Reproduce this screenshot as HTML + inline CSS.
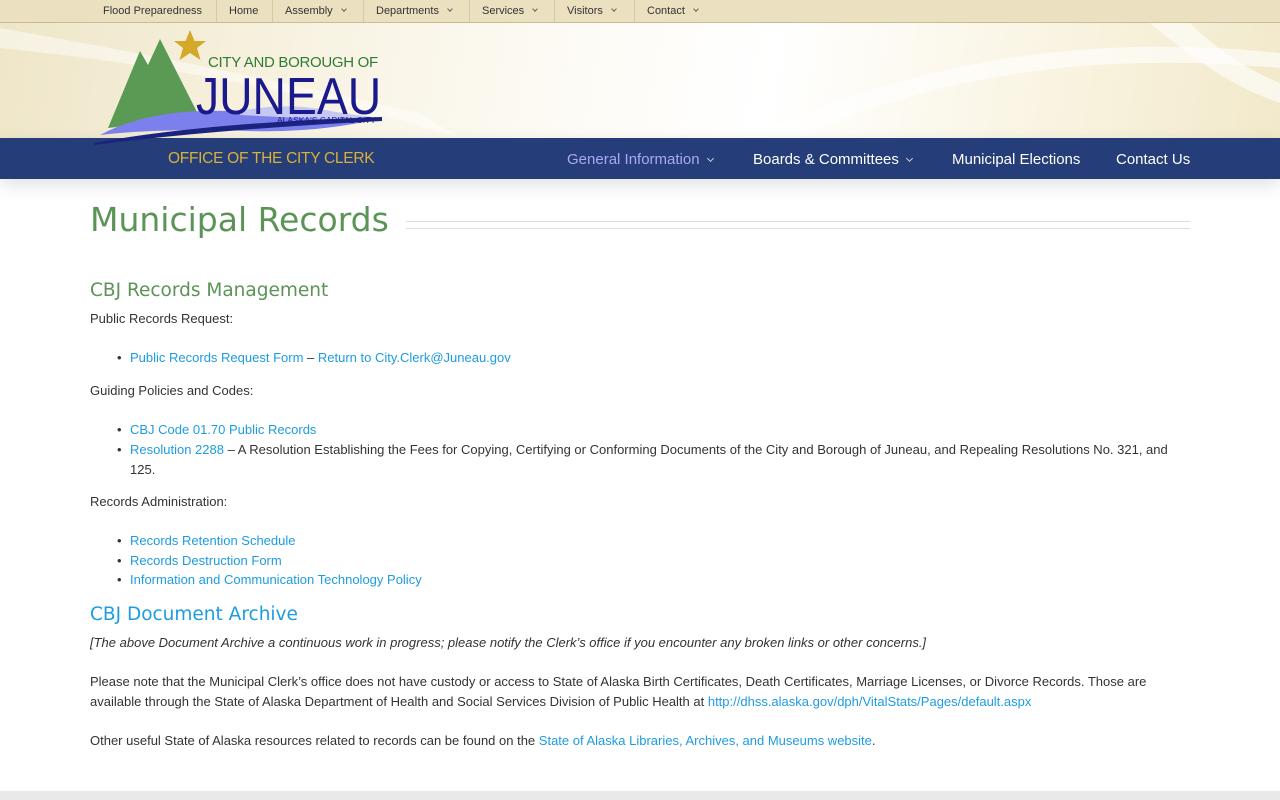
<!DOCTYPE html>
<html><head><meta charset="utf-8"><style>
*{margin:0;padding:0;box-sizing:border-box}
body{width:1280px;height:800px;overflow:hidden;background:#fff;font-family:"Liberation Sans",Arial,sans-serif;color:#333;position:relative}
.top{position:absolute;left:0;top:0;width:1280px;height:23px;background:#ebe0c0;border-bottom:1px solid #c9bb93}
.top a{position:absolute;top:0;height:22px;line-height:23px;font-size:11px;color:#333;text-decoration:none;border-left:1px solid #d6c9a4;padding:0 12px}
.car{display:inline-block;width:4px;height:4px;border-right:1px solid #666;border-bottom:1px solid #666;transform:rotate(45deg);margin-left:9px;position:relative;top:-3px}
.hdr{position:absolute;left:0;top:23px;width:1280px;height:115px;background:linear-gradient(100deg,#efe6c8 0%,#f8f3e3 25%,#fdfbf5 45%,#fff 60%,#f8f2dd 85%,#f2e9cb 100%);overflow:hidden}
.nav{position:absolute;left:0;top:138px;width:1280px;height:41px;background:#253d78;box-shadow:0 6px 18px rgba(0,0,0,.12)}
.nav a{position:absolute;top:0;line-height:44px;font-size:15px;color:#fff;text-decoration:none}
.nav .car{border-color:#ccc;width:5px;height:5px;margin-left:8px}
.content{position:absolute;left:90px;top:0;width:1100px}
h1{position:absolute;top:200px;left:0;font-family:"DejaVu Sans",sans-serif;font-weight:normal;font-size:33px;color:#5b9456;white-space:nowrap}
.rule{position:absolute;top:221px;left:316px;width:784px;height:8px;border-top:1px solid #ddd;border-bottom:1px solid #ddd}
h2{position:absolute;left:0;font-family:"DejaVu Sans",sans-serif;font-weight:normal;font-size:18.5px;white-space:nowrap}
p,li{font-size:13px;line-height:19.5px;color:#333;position:absolute;left:0;width:1100px}
ul{list-style:none}
ul li{left:40px;width:1060px}
ul li:before{content:"•";position:absolute;left:-13px}
a.l{color:#1d9ce0;text-decoration:none}
.foot{position:absolute;left:0;top:791px;width:1280px;height:9px;background:#e9e9e9}
.logo{position:absolute;left:0;top:23px;width:400px;height:125px;z-index:5}
</style></head><body>
<div class="top">
<a style="left:91px;border-left:none">Flood Preparedness</a>
<a style="left:216px">Home</a>
<a style="left:272px">Assembly<span class="car"></span></a>
<a style="left:363px">Departments<span class="car"></span></a>
<a style="left:469px">Services<span class="car"></span></a>
<a style="left:554px">Visitors<span class="car"></span></a>
<a style="left:634px">Contact<span class="car"></span></a>
</div>
<div class="hdr">
<svg width="1280" height="115" style="position:absolute;left:0;top:0">
<path d="M0 5 Q200 40 420 90 L460 115 Q250 50 0 25Z" fill="#fff" opacity=".45"/>
<path d="M760 110 Q1000 0 1280 30 L1280 45 Q1000 20 800 115Z" fill="#fff" opacity=".6"/>
<path d="M1150 0 Q1220 60 1280 80 L1280 60 Q1230 40 1190 0Z" fill="#fff" opacity=".6"/>
</svg>
</div>
<div class="nav">
<div style="position:absolute;left:168px;top:12px;font-size:16px;color:#d8b13a;letter-spacing:-.3px;white-space:nowrap;transform:scaleX(.97);transform-origin:left">OFFICE OF THE CITY CLERK</div>
<a style="left:567px;color:#a8a9f5">General Information<span class="car"></span></a>
<a style="left:753px">Boards &amp; Committees<span class="car"></span></a>
<a style="left:952px">Municipal Elections</a>
<a style="left:1116px">Contact Us</a>
</div>
<div class="logo">
<svg width="400" height="125" style="position:absolute;left:0;top:0">
<polygon points="190,7 194.5,18 206,18 197,25 200.5,37 190,30 179.5,37 183,25 174,18 185.5,18" fill="#d4a828"/>
<polygon points="108,105 140,28 148,42 160,16 200,95 150,100" fill="#5a9a55"/>
<path d="M100 112 Q150 85 230 88 Q300 92 382 95 Q320 110 250 108 Q160 105 100 112Z" fill="#7c80ec"/>
<path d="M240 88 Q280 80 320 86 Q350 92 382 95 L382 98 Q320 96 240 92Z" fill="#c5c8f3"/>
<path d="M94 120 Q200 100 382 94 L382 98 Q220 106 94 122Z" fill="#1a237e"/>
</svg>
<div style="position:absolute;left:208px;top:31px;font-size:15px;color:#2e7d32;letter-spacing:-.3px;white-space:nowrap">CITY AND BOROUGH OF</div>
<div style="position:absolute;left:196px;top:48px;font-size:52px;line-height:52px;color:#1a1a8c;transform:scaleX(.89);transform-origin:left;white-space:nowrap">JUNEAU</div>
<div style="position:absolute;left:277px;top:92px;font-size:8.5px;color:#1a1a8c;white-space:nowrap">ALASKA'S CAPITAL CITY</div>
</div>
<div class="content">
<h1>Municipal Records</h1>
<div class="rule"></div>
<h2 style="top:280px;color:#5b9456">CBJ Records Management</h2>
<p style="top:309px">Public Records Request:</p>
<ul>
<li style="top:348px"><a class="l">Public Records Request Form</a> – <a class="l">Return to City.Clerk@Juneau.gov</a></li>
</ul>
<p style="top:381px">Guiding Policies and Codes:</p>
<ul>
<li style="top:420px"><a class="l">CBJ Code 01.70 Public Records</a></li>
<li style="top:440px"><a class="l">Resolution 2288</a> – A Resolution Establishing the Fees for Copying, Certifying or Conforming Documents of the City and Borough of Juneau, and Repealing Resolutions No. 321, and 125.</li>
</ul>
<p style="top:492px">Records Administration:</p>
<ul>
<li style="top:531px"><a class="l">Records Retention Schedule</a></li>
<li style="top:551px"><a class="l">Records Destruction Form</a></li>
<li style="top:570px"><a class="l">Information and Communication Technology Policy</a></li>
</ul>
<h2 style="top:604px;color:#1d9ce0">CBJ Document Archive</h2>
<p style="top:633px;font-style:italic">[The above Document Archive a continuous work in progress; please notify the Clerk’s office if you encounter any broken links or other concerns.]</p>
<p style="top:672px">Please note that the Municipal Clerk’s office does not have custody or access to State of Alaska Birth Certificates, Death Certificates, Marriage Licenses, or Divorce Records. Those are available through the State of Alaska Department of Health and Social Services Division of Public Health at <a class="l">http://dhss.alaska.gov/dph/VitalStats/Pages/default.aspx</a></p>
<p style="top:731px">Other useful State of Alaska resources related to records can be found on the <a class="l">State of Alaska Libraries, Archives, and Museums website</a>.</p>
</div>
<div class="foot"></div>
</body></html>
